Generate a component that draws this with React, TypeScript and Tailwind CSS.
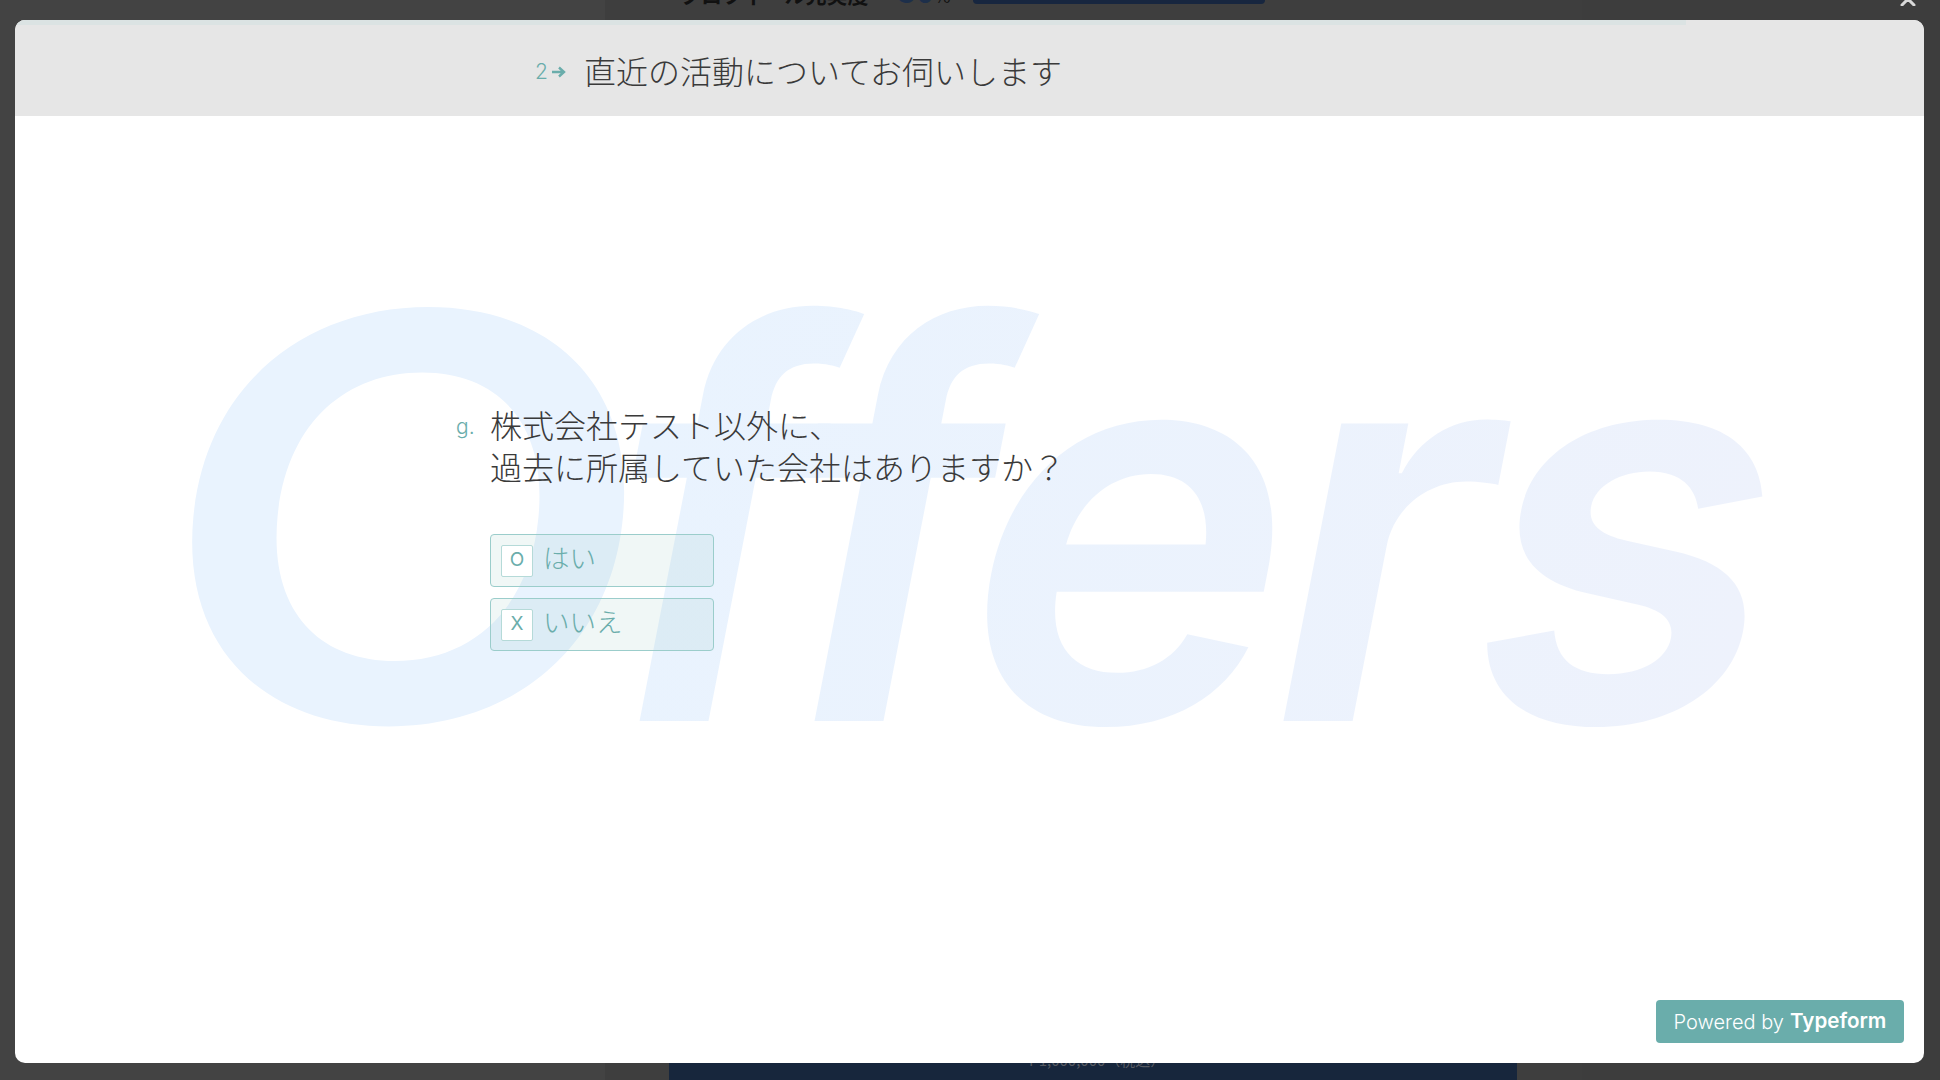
export default function App() {
  const ja = "font-['Noto_Sans_CJK_JP','Noto_Sans',sans-serif]";
  return (
    <div className="relative h-screen w-full overflow-hidden bg-[#3e3e3e]">
      <div className="absolute left-0 top-0 h-full w-[605px] bg-[#434343]" />
      <div className="absolute right-0 top-0 h-full w-[358px] bg-[#3d3d3d]" />
      <div className="absolute left-[680px] top-[-25px] flex items-baseline font-['Noto_Sans_CJK_JP',sans-serif] text-[21px] font-bold leading-[30px] text-[#111111]">
        <span>プロフィール充実度</span>
        <span className="ml-[30px] text-[30px] text-[#1d2f4a]">50</span>
        <span className="text-[18px] font-normal">%</span>
      </div>
      <div className="absolute left-[973px] top-[-6px] h-[10px] w-[292px] rounded-[4px] bg-[#17263f]" />
      <div className="absolute bottom-0 left-[669px] h-[20px] w-[848px] bg-[#17263c]">
        <span className="absolute left-[358px] top-[-8px] font-['Noto_Sans_CJK_JP',sans-serif] text-[15px] leading-[16px] text-[#565a62]">¥ 1,000,000（税込）</span>
      </div>
      <svg className="absolute right-[20px] top-[-8px] h-[14px] w-[24px]" viewBox="0 0 24 14" fill="none" stroke="#d8d8d8" strokeWidth="3" strokeLinecap="round">
        <path d="M4 1l12 12M16 1L4 13" transform="translate(2 0)" />
      </svg>

      <div className="relative flex h-full flex-col pb-[17px] pl-[15px] pr-[16px] pt-[20px]">
        <div className="relative flex flex-1 flex-col overflow-hidden rounded-[10px] bg-white">
          <div className="relative flex h-[96px] shrink-0 items-center bg-[#e6e6e6] pl-[520px]">
            <div className="absolute left-0 top-0 h-[5px] w-[1671px] bg-[#dbe3e3]" />
            <span className="w-[15px] pt-[8px] font-['Inter',sans-serif] text-[21px] font-light text-[#6aadab]">2</span>
            <svg className="ml-[2px] mt-[8px] h-[14px] w-[14px]" viewBox="0 0 14 14" fill="none" stroke="#6aadab" strokeWidth="2.4">
              <path d="M0 7h12M7 2.5L12 7l-5 4.5" />
            </svg>
            <h1 className={`${ja} ml-[18px] mt-[3px] text-[32px] font-light leading-none text-[#3a3a3a]`}>直近の活動についてお伺いします</h1>
          </div>

          <div className="relative flex-1">
            <div
              aria-hidden
              className="absolute left-[145px] top-[86px] flex h-[640px] -skew-x-[11deg] select-none items-center font-['Inter',sans-serif] text-[545px] font-[570] leading-none tracking-[-14.5px]"
            >
              <span className="inline-block origin-left -translate-y-[6px] scale-x-[1.18] scale-y-[1.03] skew-x-[5deg] pr-[54px] text-[#e9f3fe]">O</span>
              <span className="bg-gradient-to-r from-[#e9f3fe] to-[#eef2fc] bg-clip-text text-transparent">ffers</span>
            </div>

            <div className="relative pl-[440px] pt-[287px]">
              <div className="flex items-start">
                <span className="w-[35px] pl-[1px] pt-[13px] font-['Inter',sans-serif] text-[21px] font-light leading-none text-[#6aadab]">g.</span>
                <h2 className={`${ja} text-[32px] font-light leading-[42px] text-[#3a3a3a]`}>
                  株式会社テスト以外に、
                  <br />
                  過去に所属していた会社はありますか？
                </h2>
              </div>
              <div className="ml-[35px] mt-[47px] flex w-[224px] flex-col gap-[11px]">
                {[
                  ["O", "はい"],
                  ["X", "いいえ"],
                ].map(([key, label]) => (
                  <div key={key} className="flex h-[53px] items-center rounded-[4px] border border-[#9bcdcb] bg-[#6aadab]/10 pl-[10px]">
                    <span className="flex h-[32px] w-[32px] items-center justify-center rounded-[2px] border border-[#b5dad8] bg-white font-['Inter',sans-serif] text-[19px] text-[#6aadab]">
                      {key}
                    </span>
                    <span className={`${ja} ml-[10px] pb-[6px] text-[26.5px] font-light leading-none text-[#6aadab]`}>{label}</span>
                  </div>
                ))}
              </div>
            </div>

            <div className="absolute bottom-[20px] right-[20px] flex h-[43px] w-[248px] items-center justify-center gap-[6px] rounded-[4px] bg-[#6aadab] font-['Inter',sans-serif] text-white">
              <span className="text-[20px] font-light">Powered by</span>
              <span className="text-[20.6px] font-semibold">Typeform</span>
            </div>
          </div>
        </div>
      </div>
    </div>
  );
}
